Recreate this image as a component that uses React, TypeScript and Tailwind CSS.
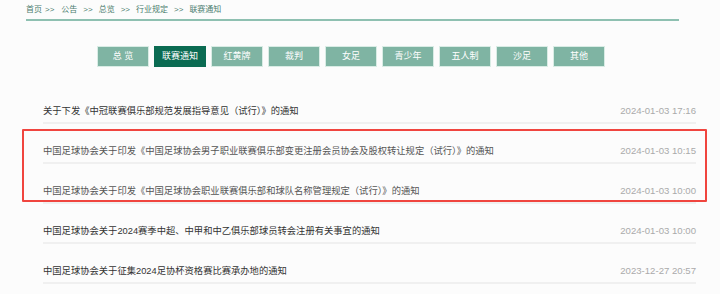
import React from "react";

const crumbs = ["首页", "公告", "总览", "行业规定", "联赛通知"];

const tabs = ["总 览", "联赛通知", "红黄牌", "裁判", "女足", "青少年", "五人制", "沙足", "其他"];

type Notice = {
  title: string;
  date: string;
  muted?: boolean;
};

const notices: Notice[] = [
  { title: "关于下发《中冠联赛俱乐部规范发展指导意见（试行）》的通知", date: "2024-01-03 17:16" },
  {
    title: "中国足球协会关于印发《中国足球协会男子职业联赛俱乐部变更注册会员协会及股权转让规定（试行）》的通知",
    date: "2024-01-03 10:15",
    muted: true,
  },
  {
    title: "中国足球协会关于印发《中国足球协会职业联赛俱乐部和球队名称管理规定（试行）》的通知",
    date: "2024-01-03 10:00",
    muted: true,
  },
  { title: "中国足球协会关于2024赛季中超、中甲和中乙俱乐部球员转会注册有关事宜的通知", date: "2024-01-03 10:00" },
  { title: "中国足球协会关于征集2024足协杯资格赛比赛承办地的通知", date: "2023-12-27 20:57" },
];

const font = { fontFamily: '"Liberation Sans", "Noto Sans CJK SC", sans-serif' };

export default function App() {
  return (
    <div className="relative w-[720px] h-[294px] overflow-hidden bg-[#fcfcfc]" style={font}>
      {/* breadcrumb */}
      <div className="ml-[26px] w-[653px] h-[21px] border-b-2 border-[#8ec0b1] flex items-center pt-[1px] text-[8px] leading-none text-[#4b7d6e]">
        {crumbs.map((crumb, i) => (
          <React.Fragment key={crumb}>
            {i > 0 && <span className={i === 1 ? "ml-[3px] mr-[7px]" : "mx-[6px]"}>&gt;&gt;</span>}
            <span>{crumb}</span>
          </React.Fragment>
        ))}
      </div>

      {/* category tabs */}
      <div className="flex gap-[5px] ml-[97px] mt-[25px]">
        {tabs.map((tab, i) => (
          <div
            key={tab}
            className={`w-[52px] h-[21px] flex items-center justify-center text-[9px] text-white border ${
              i === 1 ? "bg-[#0b6b52] border-[#0b6b52]" : "bg-[#7fb4a3] border-[#d9ece5]"
            }`}>
            {tab}
          </div>
        ))}
      </div>

      {/* notice list */}
      <div className="flex flex-col ml-[43px] w-[653px] mt-[17px]">
        {notices.map((notice) => (
          <div
            key={notice.title}
            className="h-[40px] flex items-end justify-between pb-[5px] border-b-2 border-[#f0f0f0]">
            <span className={`text-[9.3px] leading-[12px] ${notice.muted ? "text-[#555]" : "text-[#333]"}`}>
              {notice.title}
            </span>
            <span className="text-[9.6px] leading-[12px] text-[#aaa]">{notice.date}</span>
          </div>
        ))}
      </div>

      {/* red highlight annotation */}
      <div className="absolute left-[22px] top-[129px] w-[685px] h-[73px] border-2 border-[#f0453f] rounded-[1px]" />
    </div>
  );
}
